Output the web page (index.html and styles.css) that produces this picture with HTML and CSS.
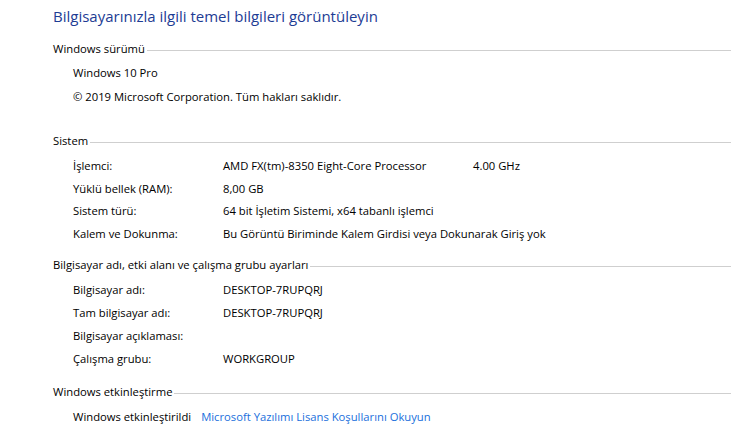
FILE: index.html
```html
<!DOCTYPE html>
<html lang="tr">
<head>
<meta charset="utf-8">
<title>Sistem</title>
<link rel="stylesheet" href="styles.css">
</head>
<body>
<div class="page">
  <h1 class="title">Bilgisayarınızla ilgili temel bilgileri görüntüleyin</h1>

  <section class="group group-edition">
    <div class="group-head"><span>Windows sürümü</span><i class="rule"></i></div>
    <div class="lines">
      <div class="line">Windows 10 Pro</div>
      <div class="line">© 2019 Microsoft Corporation. Tüm hakları saklıdır.</div>
    </div>
  </section>

  <section class="group group-system">
    <div class="group-head"><span>Sistem</span><i class="rule"></i></div>
    <div class="rows">
      <div class="row"><span class="label">İşlemci:</span><span class="value cpu">AMD FX(tm)-8350 Eight-Core Processor</span><span class="value">4.00 GHz</span></div>
      <div class="row"><span class="label">Yüklü bellek (RAM):</span><span class="value">8,00 GB</span></div>
      <div class="row"><span class="label">Sistem türü:</span><span class="value">64 bit İşletim Sistemi, x64 tabanlı işlemci</span></div>
      <div class="row"><span class="label">Kalem ve Dokunma:</span><span class="value">Bu Görüntü Biriminde Kalem Girdisi veya Dokunarak Giriş yok</span></div>
    </div>
  </section>

  <section class="group group-name">
    <div class="group-head"><span>Bilgisayar adı, etki alanı ve çalışma grubu ayarları</span><i class="rule"></i></div>
    <div class="rows rows-wide">
      <div class="row"><span class="label">Bilgisayar adı:</span><span class="value">DESKTOP-7RUPQRJ</span></div>
      <div class="row"><span class="label">Tam bilgisayar adı:</span><span class="value">DESKTOP-7RUPQRJ</span></div>
      <div class="row"><span class="label">Bilgisayar açıklaması:</span><span class="value"></span></div>
      <div class="row"><span class="label">Çalışma grubu:</span><span class="value">WORKGROUP</span></div>
    </div>
  </section>

  <section class="group group-activation">
    <div class="group-head"><span>Windows etkinleştirme</span><i class="rule"></i></div>
    <div class="activation">
      <span>Windows etkinleştirildi</span>
      <a class="link" href="#">Microsoft Yazılımı Lisans Koşullarını Okuyun</a>
    </div>
  </section>
</div>
</body>
</html>
```

FILE: styles.css
```css
html, body {
  margin: 0;
  background: #ffffff;
}

body {
  font-family: "Open Sans", "Noto Sans", sans-serif;
  font-size: 11.25px;
  color: #000000;
}

.page {
  padding: 6px 0 0 53px;
}

.title {
  margin: 0;
  font-size: 15px;
  font-weight: 400;
  line-height: 20px;
  color: #1d3c94;
}

.group-head {
  display: flex;
  align-items: center;
  height: 16px;
  line-height: 16px;
  color: #000000;
}

.group-head span {
  white-space: nowrap;
}

.rule {
  flex: 1;
  height: 1px;
  margin: 2px 0 0 2px;
  background: #cfcfcf;
}

.group-edition { margin-top: 15px; }
.group-system { margin-top: 24px; }
.group-name { margin-top: 12px; }
.group-activation { margin-top: 14px; }

.lines {
  padding: 4px 0 0 20px;
}

.line {
  height: 24px;
  line-height: 24px;
}

.rows {
  padding: 6px 0 0 20px;
}

.row {
  display: flex;
  height: 22.5px;
  line-height: 22.5px;
}

.rows-wide {
  padding-top: 5px;
}

.rows-wide .row {
  height: 23px;
  line-height: 23px;
}

.label {
  width: 150px;
  flex: none;
}

.cpu {
  width: 250px;
}

.activation {
  display: flex;
  gap: 10px;
  padding: 5px 0 0 20px;
  line-height: 24px;
}

.link {
  color: #1a6fdc;
  text-decoration: none;
}
```
